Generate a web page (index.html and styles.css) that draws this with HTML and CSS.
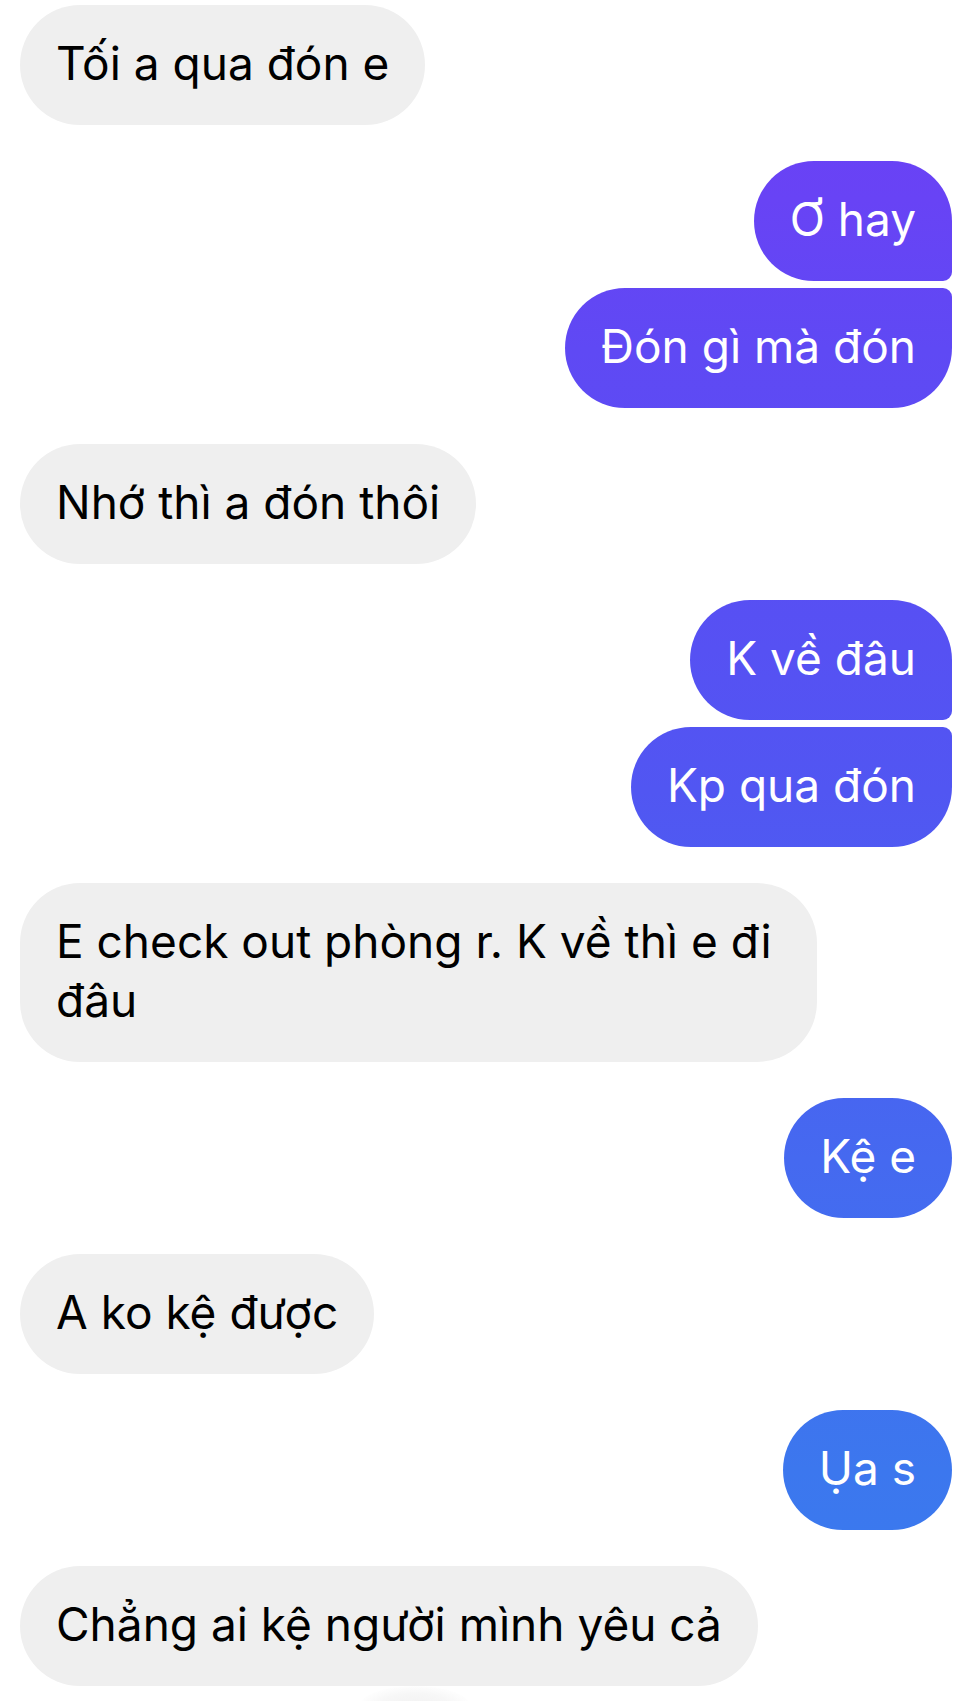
FILE: index.html
```html
<!DOCTYPE html>
<html lang="vi">
<head>
<meta charset="utf-8">
<title>Chat</title>
<link rel="stylesheet" href="styles.css">
</head>
<body>
<div class="chat">
  <div class="group in">
    <div class="bubble">Tối a qua đón e</div>
  </div>
  <div class="group out">
    <div class="bubble first">Ơ hay</div>
    <div class="bubble last">Đón gì mà đón</div>
  </div>
  <div class="group in">
    <div class="bubble">Nhớ thì a đón thôi</div>
  </div>
  <div class="group out">
    <div class="bubble first">K về đâu</div>
    <div class="bubble last">Kp qua đón</div>
  </div>
  <div class="group in">
    <div class="bubble wide">E check out phòng r. K về thì e đi đâu</div>
  </div>
  <div class="group out">
    <div class="bubble">Kệ e</div>
  </div>
  <div class="group in">
    <div class="bubble">A ko kệ được</div>
  </div>
  <div class="group out">
    <div class="bubble">Ụa s</div>
  </div>
  <div class="group in">
    <div class="bubble">Chẳng ai kệ người mình yêu cả</div>
  </div>
</div>
<div class="peek"></div>
</body>
</html>
```
FILE: styles.css
```css
html, body {
  margin: 0;
  padding: 0;
  background: #ffffff;
}
body {
  width: 977px;
  height: 1701px;
  overflow: hidden;
  position: relative;
  font-family: "Inter", "Noto Sans", sans-serif;
}
.chat {
  display: flex;
  flex-direction: column;
  gap: 36px;
  padding: 5px 25px 0 20px;
}
.group {
  display: flex;
  flex-direction: column;
  gap: 7px;
}
.group.in { align-items: flex-start; }
.group.out { align-items: flex-end; }
.bubble {
  font-size: 46px;
  line-height: 59px;
  padding: 28.5px 36px 32.5px;
  border-radius: 60px;
}
.in .bubble {
  background: #efefef;
  color: #000000;
}
.in .bubble.wide {
  max-width: 725px;
}
.out .bubble {
  color: #ffffff;
  background: linear-gradient(to bottom,
    #6c3ff6 0px,
    #6843f5 200px,
    #5f49f4 350px,
    #5651f3 650px,
    #5156f2 790px,
    #4569f0 1160px,
    #3c77ee 1470px,
    #387cee 1701px) fixed;
}
.out .bubble.first { border-bottom-right-radius: 9px; }
.out .bubble.last { border-top-right-radius: 9px; }
.peek {
  position: absolute;
  left: 360px;
  top: 1686px;
  width: 110px;
  height: 40px;
  border-radius: 50%;
  background: radial-gradient(ellipse at center, #f2f2f2 0%, #f7f7f7 45%, rgba(255,255,255,0) 75%);
}
```
